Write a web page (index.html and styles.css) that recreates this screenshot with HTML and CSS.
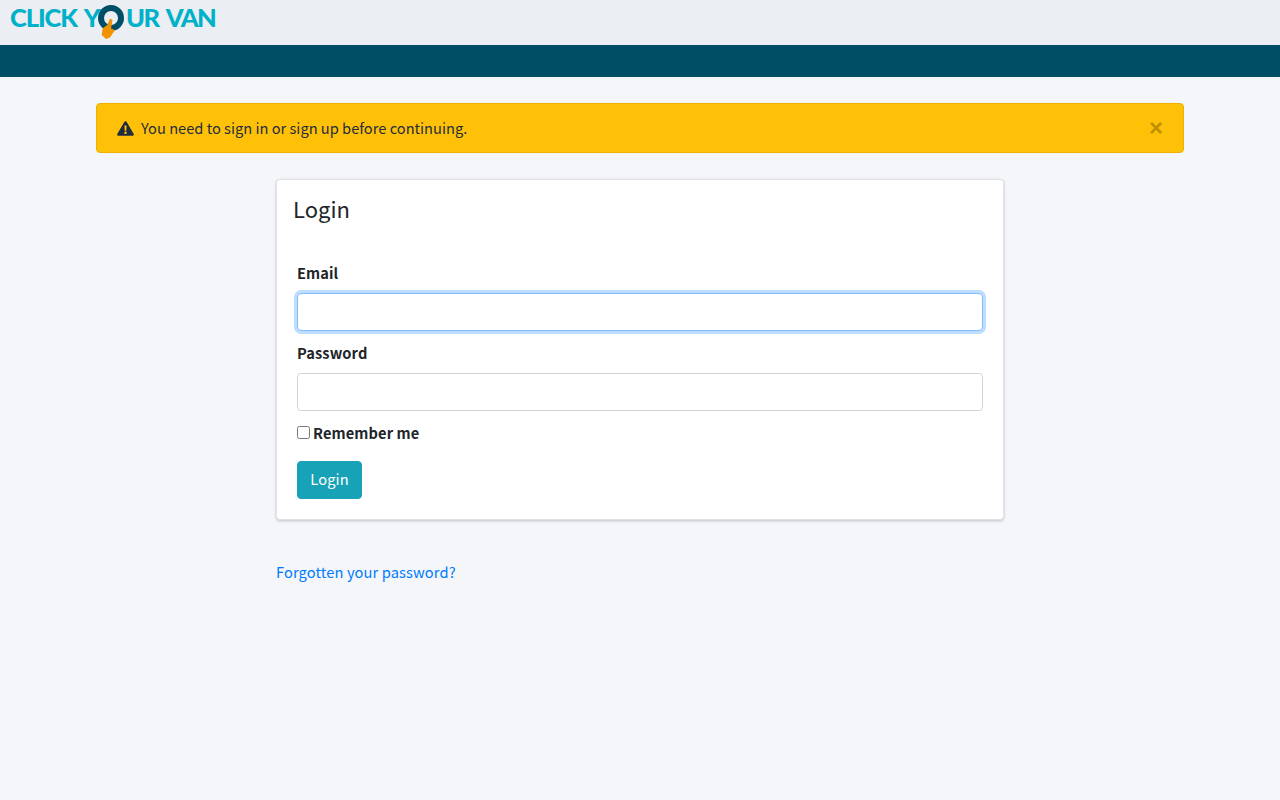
FILE: index.html
```html
<!DOCTYPE html>
<html lang="en">
<head>
<meta charset="utf-8">
<title>Login</title>
<link rel="stylesheet" href="styles.css">
</head>
<body>
<header class="topbar">
  <a class="logo" href="#">
    <span class="logo-left">CLICK Y</span>
    <span class="logo-o">
      <svg width="26" height="40" viewBox="0 0 26 40">
        <circle cx="13" cy="18" r="10" fill="none" stroke="#004f66" stroke-width="6"/>
        <path d="M12 18.500 L14.500 20 L13 28.500 L17 30 L12 37.500 L8 39 L3.700 35 L4.700 28.300 L9.300 25 Z" fill="#f39200"/>
      </svg>
    </span>
    <span class="logo-right">UR VAN</span>
  </a>
</header>
<div class="navbar"></div>
<main class="container">
  <div class="alert">
    <svg class="alert-icon" width="17" height="15" viewBox="0 0 17 15"><path fill-rule="evenodd" d="M8.5 0.2c.5 0 .9.3 1.2.7l6.900 11.900c.5.9-.1 2-1.200 2H1.600c-1.100 0-1.700-1.100-1.200-2L7.300.9c.3-.4.700-.7 1.200-.7ZM7.400 4.400l.3 5.300h1.600l.3-5.300ZM8.500 10.500a1.300 1.300 0 1 0 0 2.600 1.300 1.300 0 0 0 0-2.600Z" fill="#1f2d3d"/></svg>
    <span class="alert-text">You need to sign in or sign up before continuing.</span>
    <button class="alert-close" type="button">×</button>
  </div>
  <section class="login-column">
    <div class="card">
      <h3 class="card-title">Login</h3>
      <form class="card-body">
        <div class="field">
          <label class="label">Email</label>
          <input class="input input-focus" type="email">
        </div>
        <div class="field">
          <label class="label">Password</label>
          <input class="input" type="password">
        </div>
        <div class="remember">
          <input class="check" type="checkbox">
          <label class="label remember-label">Remember me</label>
        </div>
        <button class="btn" type="button">Login</button>
      </form>
    </div>
    <a class="forgot" href="#">Forgotten your password?</a>
  </section>
</main>
</body>
</html>
```
FILE: styles.css
```css
* { box-sizing: border-box; }
html, body { margin: 0; padding: 0; }
body {
  background: #f4f6f9;
  color: #212529;
  font-family: "Noto Sans CJK JP", "Noto Sans", sans-serif;
  font-size: 14.65px;
  line-height: 24px;
  height: 800px;
  overflow: hidden;
}
.topbar {
  height: 45px;
  background: #ebeef3;
  padding-left: 10px;
}
.logo {
  display: flex;
  align-items: flex-start;
  width: 204px;
  height: 40px;
  color: #00b1c9;
  font-family: "Lato", sans-serif;
  font-weight: 900;
  font-size: 25.5px;
  line-height: 35px;
  text-decoration: none;
  white-space: nowrap;
}
.logo-left { width: 88px; flex: none; letter-spacing: -1.1px; word-spacing: 3px; }
.logo-right { letter-spacing: -1.6px; word-spacing: 4px; }
.logo-o {
  display: block;
  width: 26px;
  height: 40px;
  flex: none;
  margin-right: 2px;
}
.logo-o svg { display: block; }
.navbar {
  height: 32px;
  background: #004e65;
}
.container {
  width: 1088px;
  margin: 26px auto 0;
}
.alert {
  display: flex;
  align-items: center;
  height: 50px;
  padding: 0 20px;
  background: #ffc107;
  border: 1px solid #edb100;
  border-radius: 4px;
  color: #1f2d3d;
}
.alert-icon { flex: none; margin-right: 7px; }
.alert-text { flex: 1; }
.alert-close {
  border: 0;
  background: none;
  padding: 0;
  color: #000;
  opacity: .25;
  font-family: "Liberation Sans", sans-serif;
  font-weight: 700;
  font-size: 24px;
  line-height: 24px;
}
.login-column {
  width: 728px;
  margin: 26px auto 0;
}
.card {
  height: 341px;
  background: #fff;
  border: 1px solid #e2e3e6;
  border-radius: 4px;
  box-shadow: 0 1px 3px rgba(0,0,0,.22);
  padding: 10px 20px 0 20px;
}
.card-title {
  margin: 0 0 0 -4px;
  font-size: 22px;
  line-height: 36px;
  font-weight: 400;
}
.card-body { padding-top: 35px; }
.field { margin-bottom: 10px; }
.label {
  display: block;
  font-weight: 700;
  margin-bottom: 8px;
  letter-spacing: .1px;
}
.input {
  display: block;
  width: 100%;
  height: 38px;
  background: #fff;
  border: 1px solid #ced4da;
  border-radius: 4px;
  padding: 6px 12px;
}
.input-focus {
  border-color: #80bdff;
  box-shadow: 0 0 0 3px rgba(0,123,255,.25);
  outline: 0;
}
.remember {
  display: flex;
  align-items: center;
  height: 24px;
  margin-bottom: 16px;
}
.check {
  width: 13px;
  height: 13px;
  margin: 0 3px 2px 0;
}
.remember-label { margin: 0; }
.btn {
  display: block;
  height: 38px;
  width: 65px;
  padding: 0 0 2px;
  border: 1px solid #17a2b8;
  border-radius: 4px;
  background: #17a2b8;
  color: #fff;
  font: inherit;
  letter-spacing: .1px;
}
.forgot {
  display: block;
  margin-top: 40px;
  color: #007bff;
  text-decoration: none;
  letter-spacing: .12px;
}
```
